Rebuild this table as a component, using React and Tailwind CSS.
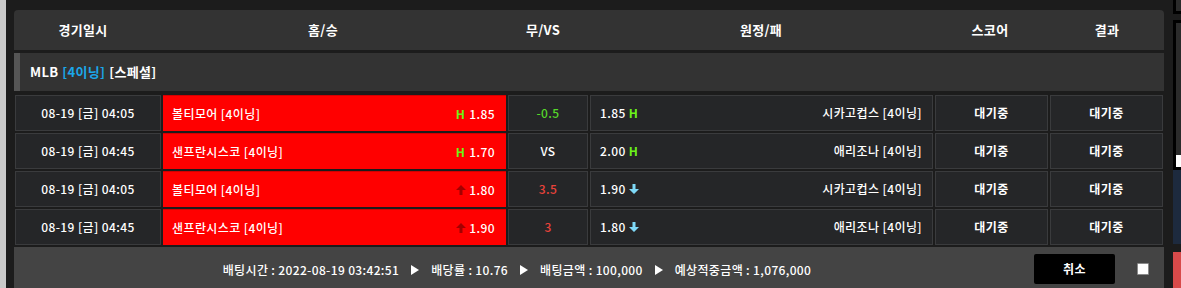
import React from "react";

const rows = [
  { date: "08-19 [금] 04:05", home: "볼티모어 [4이닝]", hOdd: "1.85", hMark: "H", mid: "-0.5", midColor: "text-[#55d62a]", aOdd: "1.85", aMark: "H", away: "시카고컵스 [4이닝]" },
  { date: "08-19 [금] 04:45", home: "샌프란시스코 [4이닝]", hOdd: "1.70", hMark: "H", mid: "VS", midColor: "text-white", aOdd: "2.00", aMark: "H", away: "애리조나 [4이닝]" },
  { date: "08-19 [금] 04:05", home: "볼티모어 [4이닝]", hOdd: "1.80", hMark: "up", mid: "3.5", midColor: "text-[#e8423a]", aOdd: "1.90", aMark: "down", away: "시카고컵스 [4이닝]" },
  { date: "08-19 [금] 04:45", home: "샌프란시스코 [4이닝]", hOdd: "1.90", hMark: "up", mid: "3", midColor: "text-[#e8423a]", aOdd: "1.80", aMark: "down", away: "애리조나 [4이닝]" },
];

function UpArrow() {
  return (
    <svg width="10" height="10" viewBox="0 0 10 10" className="mr-[3px]">
      <path d="M5 0 L10 5 L6.5 5 L6.5 10 L3.5 10 L3.5 5 L0 5 Z" fill="#a30000" />
    </svg>
  );
}

function DownArrow() {
  return (
    <svg width="10" height="10" viewBox="0 0 10 10" className="ml-[3px]">
      <path d="M3.5 0 L6.5 0 L6.5 5 L10 5 L5 10 L0 5 L3.5 5 Z" fill="#7fd9f7" />
    </svg>
  );
}

function Mark({ type, side }) {
  if (type === "H")
    return (
      <span className={`font-bold text-[#6cf318] ${side === "home" ? "mr-[4px]" : "ml-[3px]"}`}>H</span>
    );
  if (type === "up") return <UpArrow />;
  return <DownArrow />;
}

function Tri() {
  return (
    <svg width="8" height="10" viewBox="0 0 8 10" className="mx-[12px]">
      <path d="M0 0 L8 5 L0 10 Z" fill="#ffffff" />
    </svg>
  );
}

const cell = "h-[36px] flex items-center bg-[#252628] border border-[#3a3b3d]";

export default function App() {
  return (
    <div className="flex w-[1181px] h-[288px] overflow-hidden bg-[#1c1c1c] font-['Noto_Sans_CJK_KR',sans-serif] text-[12px] text-white">
      <div className="w-[6px] bg-[#c9c9c9]" />
      <div className="pl-[8px] pt-[10px] pr-[9px]">
        <div className="w-[1150px]">
          <div className="grid grid-cols-[138px_342px_98px_338px_120px_114px] h-[40px] items-center rounded-t-[4px] bg-[#333333] text-[13px] font-bold text-center tracking-[0.3px]">
            <div>경기일시</div>
            <div>홈/승</div>
            <div>무/VS</div>
            <div>원정/패</div>
            <div>스코어</div>
            <div>결과</div>
          </div>

          <div className="mt-[3px] h-[38px] flex items-center bg-[#333333] border-l-[6px] border-[#555555] pl-[10px] text-[13px] font-bold tracking-[0.3px]">
            <span>MLB</span>
            <span className="ml-[4px] text-[#1ba7ea]">[4이닝]</span>
            <span className="ml-[4px]">[스페셜]</span>
          </div>

          <div className="mt-[4px] flex flex-col gap-[2px] px-px tracking-[0.4px]">
            {rows.map((r, i) => (
              <div key={i} className="grid grid-cols-[146px_343px_80px_343px_113px_113px] gap-[2px]">
                <div className={`${cell} justify-center font-medium`}>{r.date}</div>
                <div className="h-[36px] flex items-center justify-between bg-[#ff0000] border-t border-[#d40000] pl-[9px] pr-[11px] font-medium">
                  <span>{r.home}</span>
                  <span className="flex items-center">
                    <Mark type={r.hMark} side="home" />
                    <span>{r.hOdd}</span>
                  </span>
                </div>
                <div className={`${cell} justify-center font-medium ${r.midColor}`}>{r.mid}</div>
                <div className={`${cell} justify-between pl-[9px] pr-[10px] font-medium`}>
                  <span className="flex items-center">
                    <span>{r.aOdd}</span>
                    <Mark type={r.aMark} side="away" />
                  </span>
                  <span>{r.away}</span>
                </div>
                <div className={`${cell} justify-center font-bold`}>대기중</div>
                <div className={`${cell} justify-center font-bold`}>대기중</div>
              </div>
            ))}
          </div>

          <div className="mt-[2px] h-[44px] flex items-center bg-[#444444] font-medium tracking-[0.35px]">
            <div className="flex-1 flex items-center justify-center pt-[2px]">
              <span>배팅시간 : 2022-08-19 03:42:51</span>
              <Tri />
              <span>배당률 : 10.76</span>
              <Tri />
              <span>배팅금액 : 100,000</span>
              <Tri />
              <span>예상적중금액 : 1,076,000</span>
            </div>
            <button className="ml-[14px] w-[81px] h-[30px] rounded-[2px] bg-black text-[12px] font-bold text-white">
              취소
            </button>
            <div className="ml-[22px] mr-[15px] w-[12px] h-[12px] bg-white border border-[#8a8a8a] rounded-[1px]" />
          </div>
        </div>
      </div>
      <div className="w-[8px] flex flex-col">
        <div className="h-[14px] border-l-[3px] border-b-[3px] border-black bg-[#2b2b2b]" />
        <div className="mt-[6px] h-[150px] border-l-[3px] border-t-[3px] border-b-[3px] border-black bg-[#2b2b2b] flex flex-col justify-end">
          <div className="h-[12px] bg-white" />
        </div>
        <div className="h-[74px] bg-[#1d2a3e]" />
        <div className="mt-[8px] flex-1 bg-[#d84a4a]" />
      </div>
    </div>
  );
}
